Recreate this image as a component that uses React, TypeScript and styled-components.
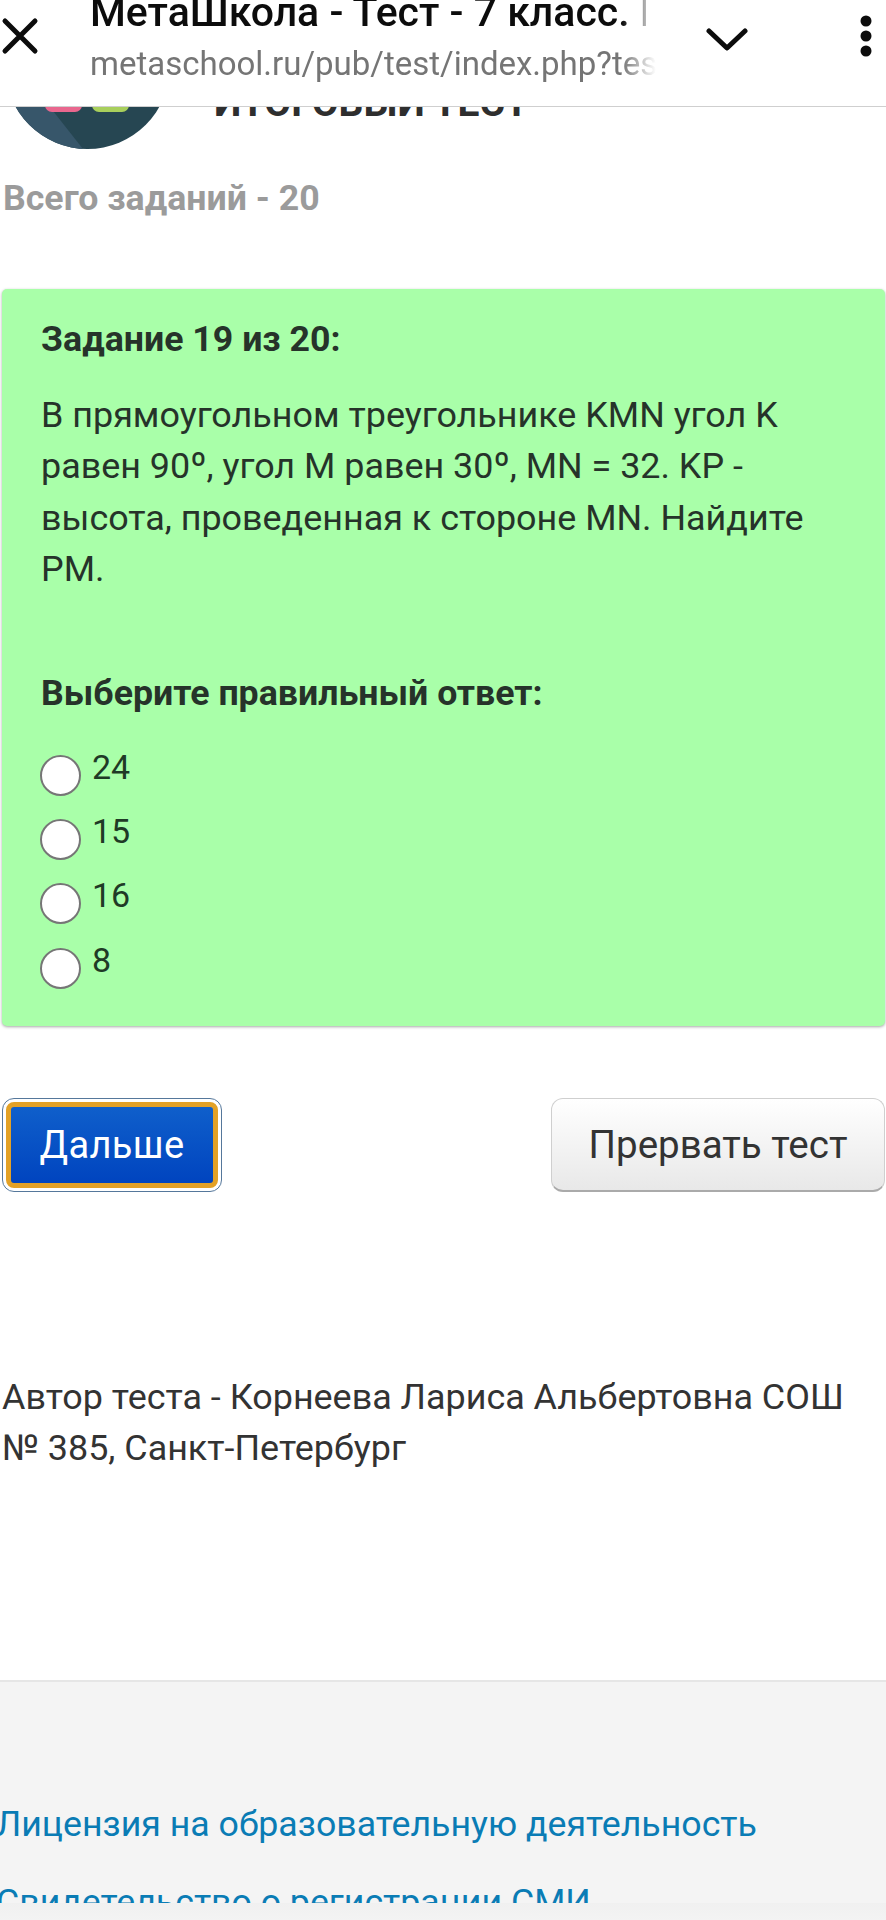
import React from "react";
import styled, { createGlobalStyle } from "styled-components";

const Global = createGlobalStyle`
  html, body { margin: 0; padding: 0; background: #fff; }
  body { font-family: Roboto, "Liberation Sans", sans-serif; color: #333; }
  * { box-sizing: border-box; }
`;

const Page = styled.div`
  position: relative;
  width: 886px;
  height: 1920px;
  overflow: hidden;
  background: #fff;
`;

const BrowserBar = styled.header`
  position: absolute;
  inset: 0 0 auto 0;
  height: 107px;
  display: flex;
  align-items: flex-start;
  background: #fff;
  border-bottom: 1px solid #cfcfcf;
  z-index: 2;
`;

const CloseSlot = styled.div`
  width: 90px;
  flex: none;
  padding: 16px 0 0 0;
`;

const Titles = styled.div`
  width: 566px;
  flex: none;
  overflow: hidden;
  white-space: nowrap;
  -webkit-mask-image: linear-gradient(to right, #000 94%, transparent 100%);
  mask-image: linear-gradient(to right, #000 94%, transparent 100%);
`;

const PageTitle = styled.div`
  font-size: 41px;
  font-weight: 500;
  line-height: 40px;
  height: 36px;
  width: 556px;
  overflow: hidden;
  margin-top: -8px;
  color: #0c0c0c;
`;

const PageUrl = styled.div`
  font-size: 33px;
  line-height: 36px;
  margin-top: 18px;
  color: #757575;
`;

const ChevronSlot = styled.div`
  width: 198px;
  flex: none;
  padding: 26px 0 0 50px;
`;

const DotsSlot = styled.div`
  flex: 1;
  padding: 15px 0 0 6px;
`;

const Content = styled.main`
  padding: 0 2px;
`;

const Hero = styled.div`
  display: flex;
  height: 165px;
  margin-top: -16px;
  padding-left: 3px;
  align-items: flex-end;
`;

const Logo = styled.div`
  width: 165px;
  height: 165px;
  flex: none;
`;

const HeroTitle = styled.h1`
  margin: 0 0 26px 44px;
  font-size: 39px;
  line-height: 40px;
  font-weight: 700;
  color: #2e2e2e;
  white-space: nowrap;
`;

const TaskCount = styled.div`
  margin: 29px 0 0 1px;
  font-size: 35.7px;
  line-height: 40px;
  font-weight: 700;
  color: #9b9b9b;
`;

const Card = styled.section`
  margin-top: 71px;
  width: 883px;
  padding: 30px 30px 22px 39px;
  background: #a9ffa9;
  border-radius: 5px;
  box-shadow: 0 1px 3px rgba(0, 0, 0, 0.35);
  color: #26332a;
`;

const CardHeading = styled.div`
  font-size: 35.7px;
  line-height: 40px;
  font-weight: 700;
`;

const Question = styled.p`
  margin: 31px 0 0;
  font-size: 35.9px;
  line-height: 51.4px;
  color: #26332a;
`;

const AnswerHeading = styled(CardHeading)`
  margin-top: 77px;
`;

const Options = styled.div`
  margin-top: 34px;
  margin-left: -1px;
  display: flex;
  flex-direction: column;
`;

const Option = styled.label`
  height: 64.3px;
  display: flex;
  align-items: flex-start;
  gap: 11px;
  font-size: 34px;
  line-height: 40px;
  color: #1f3a26;
`;

const Radio = styled.span`
  width: 41px;
  height: 41px;
  margin-top: 8px;
  flex: none;
  border-radius: 50%;
  background: #fff;
  border: 2px solid #767676;
`;

const Actions = styled.div`
  margin-top: 72px;
  display: flex;
  justify-content: space-between;
  width: 883px;
`;

const PrimaryFrame = styled.div`
  width: 220px;
  height: 94px;
  padding: 3px;
  border-radius: 12px;
  border: 1px solid #55779b;
  background: #fff;
`;

const PrimaryButton = styled.button`
  width: 100%;
  height: 100%;
  padding: 0;
  border: 5px solid #e3a126;
  border-radius: 8px;
  background: linear-gradient(#0f5fcb, #0044bf);
  color: #fff;
  font: 400 38px Roboto, sans-serif;
  letter-spacing: 0.4px;
`;

const SecondaryButton = styled.button`
  width: 334px;
  height: 94px;
  padding: 0;
  border: 1px solid #cfcfcf;
  border-bottom: 2px solid #aaaaaa;
  border-radius: 12px;
  background: linear-gradient(#ffffff, #e8e8e8);
  color: #333;
  font: 400 38.5px Roboto, sans-serif;
`;

const Author = styled.p`
  margin: 180px 0 0 0;
  font-size: 35.9px;
  line-height: 51.4px;
  color: #333;
`;

const Footer = styled.footer`
  margin-top: 205px;
  height: 240px;
  background: #f4f4f4;
  border-top: 2px solid #e6e6e6;
  overflow: hidden;
  position: relative;
`;

const FooterLinks = styled.nav`
  padding-top: 122px;
  margin-left: -4px;
  display: flex;
  flex-direction: column;
  gap: 38px;
`;

const FooterLink = styled.a`
  font-family: Roboto, "Liberation Sans", Arial, sans-serif;
  font-size: 35.7px;
  line-height: 40px;
  color: #0a7cb5;
  white-space: nowrap;
`;

const BottomFade = styled.div`
  position: absolute;
  inset: auto 0 0 0;
  height: 17px;
  background: linear-gradient(#f0f0f0, #f3f3f3);
`;

export default function App() {
  return (
    <Page>
      <Global />
      <BrowserBar>
        <CloseSlot>
          <svg width="42" height="42" viewBox="0 0 42 42" aria-hidden="true">
            <path d="M5 5 L35 35 M35 5 L5 35" stroke="#0c0c0c" strokeWidth="5" strokeLinecap="round" />
          </svg>
        </CloseSlot>
        <Titles>
          <PageTitle>МетаШкола - Тест - 7 класс. Геометрия</PageTitle>
          <PageUrl>metaschool.ru/pub/test/index.php?test=1234</PageUrl>
        </Titles>
        <ChevronSlot>
          <svg width="42" height="26" viewBox="0 0 42 26" aria-hidden="true">
            <path d="M3 5 L21 22 L39 5" fill="none" stroke="#0c0c0c" strokeWidth="5" strokeLinecap="round" strokeLinejoin="round" />
          </svg>
        </ChevronSlot>
        <DotsSlot>
          <svg width="14" height="44" viewBox="0 0 14 44" aria-hidden="true">
            <circle cx="6" cy="6" r="5.5" fill="#0c0c0c" />
            <circle cx="6" cy="21" r="5.5" fill="#0c0c0c" />
            <circle cx="6" cy="36" r="5.5" fill="#0c0c0c" />
          </svg>
        </DotsSlot>
      </BrowserBar>
      <Content>
        <Hero>
          <Logo>
            <svg width="165" height="165" viewBox="0 0 165 165" aria-hidden="true">
              <defs>
                <clipPath id="logoClip"><circle cx="82.5" cy="82.5" r="82.5" /></clipPath>
              </defs>
              <g clipPath="url(#logoClip)">
                <rect width="165" height="165" fill="#264652" />
                <path d="M0 66 L78 165 H0 Z" fill="#37566a" />
                <rect x="40" y="90" width="37" height="38" rx="7" fill="#e9678e" />
                <rect x="87" y="90" width="37" height="38" rx="7" fill="#a8cf5c" />
              </g>
            </svg>
          </Logo>
          <HeroTitle>ИТОГОВЫЙ ТЕСТ</HeroTitle>
        </Hero>
        <TaskCount>Всего заданий - 20</TaskCount>
        <Card>
          <CardHeading>Задание 19 из 20:</CardHeading>
          <Question>
            В прямоугольном треугольнике KMN угол K равен 90º, угол M равен 30º, MN = 32. KP - высота, проведенная к стороне MN. Найдите PM.
          </Question>
          <AnswerHeading>Выберите правильный ответ:</AnswerHeading>
          <Options>
            {["24", "15", "16", "8"].map((v) => (
              <Option key={v}>
                <Radio />
                <span>{v}</span>
              </Option>
            ))}
          </Options>
        </Card>
        <Actions>
          <PrimaryFrame>
            <PrimaryButton>Дальше</PrimaryButton>
          </PrimaryFrame>
          <SecondaryButton>Прервать тест</SecondaryButton>
        </Actions>
        <Author>Автор теста - Корнеева Лариса Альбертовна СОШ № 385, Санкт-Петербург</Author>
      </Content>
      <Footer>
        <FooterLinks>
          <FooterLink>Лицензия на образовательную деятельность</FooterLink>
          <FooterLink>Свидетельство о регистрации СМИ</FooterLink>
        </FooterLinks>
        <BottomFade />
      </Footer>
    </Page>
  );
}
